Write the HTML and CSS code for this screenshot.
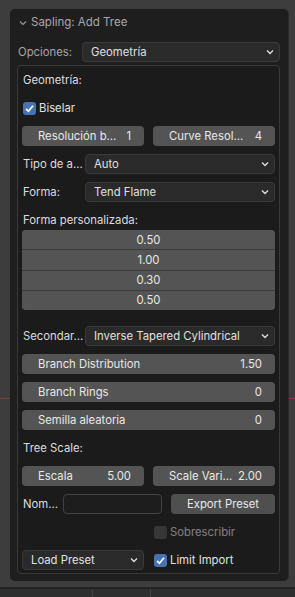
FILE: index.html
```html
<!DOCTYPE html>
<html lang="es">

<head>
  <meta charset="UTF-8">
  <meta name="viewport" content="width=device-width, initial-scale=1.0">
  <title>Sapling: Add Tree</title>
  <link rel="stylesheet" href="styles.css">
</head>

<body>

  <div class="viewport">
    <div class="panel">
      <div class="panel-head">
        <svg class="chev-head" width="8" height="6" viewBox="0 0 8 6"><path d="M1 1.5 L4 4.5 L7 1.5" fill="none" stroke="#9a9a9a" stroke-width="1.1"/></svg>
        <span>Sapling: Add Tree</span>
      </div>

      <div class="row top-row">
        <span class="label dim">Opciones:</span>
        <div class="menu wide">Geometría<svg class="chev" width="8" height="6" viewBox="0 0 8 6"><path d="M1 1.5 L4 4.5 L7 1.5" fill="none" stroke="#e0e0e0" stroke-width="1.3"/></svg></div>
      </div>

      <div class="box">
        <div class="row"><span class="label">Geometría:</span></div>

        <div class="row">
          <span class="check on"><svg width="13" height="13" viewBox="0 0 13 13"><path d="M3 6.8 L5.4 9.2 L10 3.8" fill="none" stroke="#fff" stroke-width="1.7"/></svg></span>
          <span class="check-text">Biselar</span>
        </div>

        <div class="row split">
          <div class="num"><span>Resolución b…</span><span>1</span></div>
          <div class="num"><span>Curve Resol…</span><span>4</span></div>
        </div>

        <div class="row">
          <span class="label short">Tipo de a…</span>
          <div class="menu">Auto<svg class="chev" width="8" height="6" viewBox="0 0 8 6"><path d="M1 1.5 L4 4.5 L7 1.5" fill="none" stroke="#e0e0e0" stroke-width="1.3"/></svg></div>
        </div>

        <div class="row">
          <span class="label short">Forma:</span>
          <div class="menu">Tend Flame<svg class="chev" width="8" height="6" viewBox="0 0 8 6"><path d="M1 1.5 L4 4.5 L7 1.5" fill="none" stroke="#e0e0e0" stroke-width="1.3"/></svg></div>
        </div>

        <div class="group">
          <div class="row"><span class="label">Forma personalizada:</span></div>
          <div class="column">
            <div class="cell">0.50</div>
            <div class="cell">1.00</div>
            <div class="cell">0.30</div>
            <div class="cell">0.50</div>
          </div>
        </div>

        <div class="row spaced">
          <span class="label short">Secondar…</span>
          <div class="menu">Inverse Tapered Cylindrical<svg class="chev" width="8" height="6" viewBox="0 0 8 6"><path d="M1 1.5 L4 4.5 L7 1.5" fill="none" stroke="#e0e0e0" stroke-width="1.3"/></svg></div>
        </div>

        <div class="row"><div class="num full"><span>Branch Distribution</span><span>1.50</span></div></div>
        <div class="row"><div class="num full"><span>Branch Rings</span><span>0</span></div></div>
        <div class="row"><div class="num full"><span>Semilla aleatoria</span><span>0</span></div></div>

        <div class="row"><span class="label">Tree Scale:</span></div>

        <div class="row split">
          <div class="num"><span>Escala</span><span>5.00</span></div>
          <div class="num"><span>Scale Vari…</span><span>2.00</span></div>
        </div>

        <div class="row">
          <span class="label tiny">Nom…</span>
          <div class="text-input"></div>
          <div class="button">Export Preset</div>
        </div>

        <div class="row split">
          <div></div>
          <div class="half disabled">
            <span class="check"></span>
            <span class="check-text">Sobrescribir</span>
          </div>
        </div>

        <div class="row split">
          <div class="menu">Load Preset<svg class="chev" width="8" height="6" viewBox="0 0 8 6"><path d="M1 1.5 L4 4.5 L7 1.5" fill="none" stroke="#e0e0e0" stroke-width="1.3"/></svg></div>
          <div class="half">
            <span class="check on"><svg width="13" height="13" viewBox="0 0 13 13"><path d="M3 6.8 L5.4 9.2 L10 3.8" fill="none" stroke="#fff" stroke-width="1.7"/></svg></span>
            <span class="check-text">Limit Import</span>
          </div>
        </div>
      </div>
    </div>
  </div>

  <div class="footer">
    <div class="tab"></div>
    <div class="tab small"></div>
  </div>

</body>

</html>
```

FILE: styles.css
```css
body {
  margin: 0;
  width: 295px;
  height: 597px;
  overflow: hidden;
  background-color: #3d3d3d;
  font-family: Inter, "Noto Sans", sans-serif;
  font-size: 11.3px;
  color: #e0e0e0;
}

/* the 3d view behind the panel, with its red x axis */
.viewport {
  height: 587px;
  padding-top: 9px;
  box-sizing: border-box;
  background:
    linear-gradient(to bottom, transparent 398px, #8a3a3a 398px, #8a3a3a 399px, transparent 399px),
    #3d3d3d;
}

.panel {
  margin-left: 10px;
  width: 278px;
  height: 572px;
  box-sizing: border-box;
  padding: 0 8px 0 7px;
  background-color: #1e1e1e;
  border-radius: 5px;
  box-shadow: 1px 0 0 #2a2a2a;
}

.panel-head {
  height: 26px;
  display: flex;
  align-items: center;
  padding-left: 2px;
  gap: 4px;
  font-size: 11.5px;
  color: #a8a8a8;
}

.chev-head {
  margin-top: 1px;
}

.row {
  height: 20px;
  display: flex;
  align-items: center;
  gap: 9px;
  flex-shrink: 0;
}

.top-row {
  margin-top: 7px;
  gap: 0;
}

.label {
  padding-left: 1px;
  color: #dcdcdc;
  white-space: nowrap;
}

.dim {
  color: #a6a6a6;
  width: 64px;
}

.short {
  width: 62px;
  margin-right: -9px;
}

.tiny {
  width: 30px;
}

.menu {
  flex: 1;
  height: 20px;
  box-sizing: border-box;
  display: flex;
  align-items: center;
  padding: 0 5px 0 8px;
  background-color: #2a2a2a;
  border: 1px solid #3a3a3a;
  border-radius: 4px;
  color: #e0e0e0;
  white-space: nowrap;
}

.menu .chev {
  margin-left: auto;
}

.box {
  margin-top: 3px;
  height: 509px;
  box-sizing: border-box;
  padding: 4px;
  border: 1px solid #393939;
  border-radius: 4px;
  background-color: #1b1b1b;
  display: flex;
  flex-direction: column;
  gap: 8px;
}

/* two equal halves, like blender's row split */
.split {
  display: grid;
  grid-template-columns: 1fr 1fr;
  column-gap: 9px;
}

.num {
  height: 20px;
  box-sizing: border-box;
  display: flex;
  align-items: center;
  justify-content: space-between;
  padding: 0 13px 0 16px;
  background-color: #545454;
  border-radius: 4px;
  color: #e8e8e8;
  white-space: nowrap;
}

.full {
  flex: 1;
}

.check {
  width: 13px;
  height: 13px;
  margin-left: 1px;
  border-radius: 3px;
  background-color: #545454;
  display: flex;
}

.check.on {
  background-color: #4772b3;
}

.check-text {
  margin-left: -6px;
  color: #e0e0e0;
}

.half {
  height: 20px;
  display: flex;
  align-items: center;
  gap: 9px;
}

.disabled {
  opacity: 0.5;
}

.group {
  display: flex;
  flex-direction: column;
}

.column {
  height: 80px;
  display: flex;
  flex-direction: column;
  gap: 1px;
  background-color: #3a3a3a;
  border-radius: 4px;
  overflow: hidden;
}

.cell {
  flex: 1;
  display: flex;
  align-items: center;
  justify-content: center;
  background-color: #545454;
  color: #e8e8e8;
}

.spaced {
  margin-top: 8px;
}

.text-input {
  width: 99px;
  height: 20px;
  box-sizing: border-box;
  margin-left: 1px;
  background-color: #1d1d1d;
  border: 1px solid #424242;
  border-radius: 4px;
}

.button {
  flex: 1;
  height: 20px;
  display: flex;
  align-items: center;
  justify-content: center;
  background-color: #4f4f4f;
  border-radius: 4px;
  color: #e8e8e8;
}

.footer {
  height: 10px;
  border-top: 2px solid #222;
  background-color: #2e2e2e;
  display: flex;
}

.tab {
  width: 92px;
  border-right: 1px solid #444;
}

.tab.small {
  width: 57px;
}
```
